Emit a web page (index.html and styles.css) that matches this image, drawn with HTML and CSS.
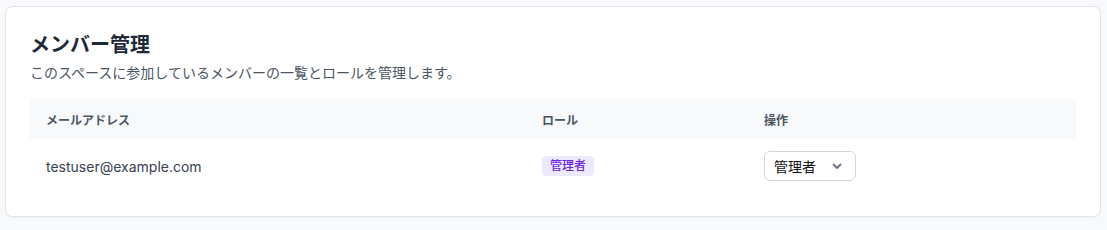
FILE: index.html
```html
<!DOCTYPE html>
<html lang="ja">
<head>
    <meta charset="UTF-8">
    <meta name="viewport" content="width=device-width, initial-scale=1.0">
    <title>メンバー管理</title>
    <link rel="stylesheet" href="styles.css">
</head>
<body>
    <div class="card">
        <h2 class="card-title">メンバー管理</h2>
        <p class="card-desc">このスペースに参加しているメンバーの一覧とロールを管理します。</p>

        <table class="members">
            <thead>
                <tr>
                    <th class="col-email">メールアドレス</th>
                    <th class="col-role">ロール</th>
                    <th>操作</th>
                </tr>
            </thead>
            <tbody>
                <tr>
                    <td class="email">testuser@example.com</td>
                    <td><span class="badge">管理者</span></td>
                    <td>
                        <div class="select">
                            <span>管理者</span>
                            <svg width="12" height="12" viewBox="0 0 12 12" fill="none" stroke="#6b7280" stroke-width="1.8" stroke-linecap="round" stroke-linejoin="round"><path d="M2.5 4.5 6 8l3.5-3.5"/></svg>
                        </div>
                    </td>
                </tr>
            </tbody>
        </table>
    </div>
</body>
</html>
```

FILE: styles.css
```css
body {
    margin: 0;
    padding: 6px 6px 6px 5px;
    background: #f8f9fb;
    font-family: Inter, "Noto Sans CJK JP", sans-serif;
    color: #1f2937;
}
.card {
    background: #fff;
    border: 1px solid #e3e4ea;
    border-radius: 8px;
    box-shadow: 0 1px 2px rgba(0, 0, 0, 0.04);
    padding: 24px 24px 23px 24px;
}
.card-title {
    margin: 0 0 4px;
    font-size: 20px;
    line-height: 28px;
    font-weight: 700;
    color: #1f2937;
}
.card-desc {
    margin: 0 0 16px;
    font-size: 14px;
    line-height: 20px;
    color: #4b5563;
}
.members {
    width: 100%;
    border-collapse: collapse;
}
.members th {
    background: #f8f9fb;
    text-align: left;
    font-size: 12px;
    font-weight: 700;
    color: #4b5563;
    height: 40px;
    padding: 0 16px;
}
.col-email {
    width: 464px;
}
.col-role {
    width: 190px;
}
.members td {
    padding: 12px 16px;
    font-size: 14px;
    color: #374151;
    height: 30px;
}
.badge {
    display: inline-block;
    background: #ede9fe;
    color: #6d28d9;
    font-size: 12px;
    font-weight: 500;
    line-height: 20px;
    padding: 0 8px;
    border-radius: 4px;
}
.select {
    display: inline-flex;
    align-items: center;
    justify-content: space-between;
    box-sizing: border-box;
    width: 92px;
    height: 30px;
    padding: 0 12px 0 9px;
    border: 1px solid #d1d5db;
    border-radius: 6px;
    font-size: 14px;
    color: #111;
}
```
